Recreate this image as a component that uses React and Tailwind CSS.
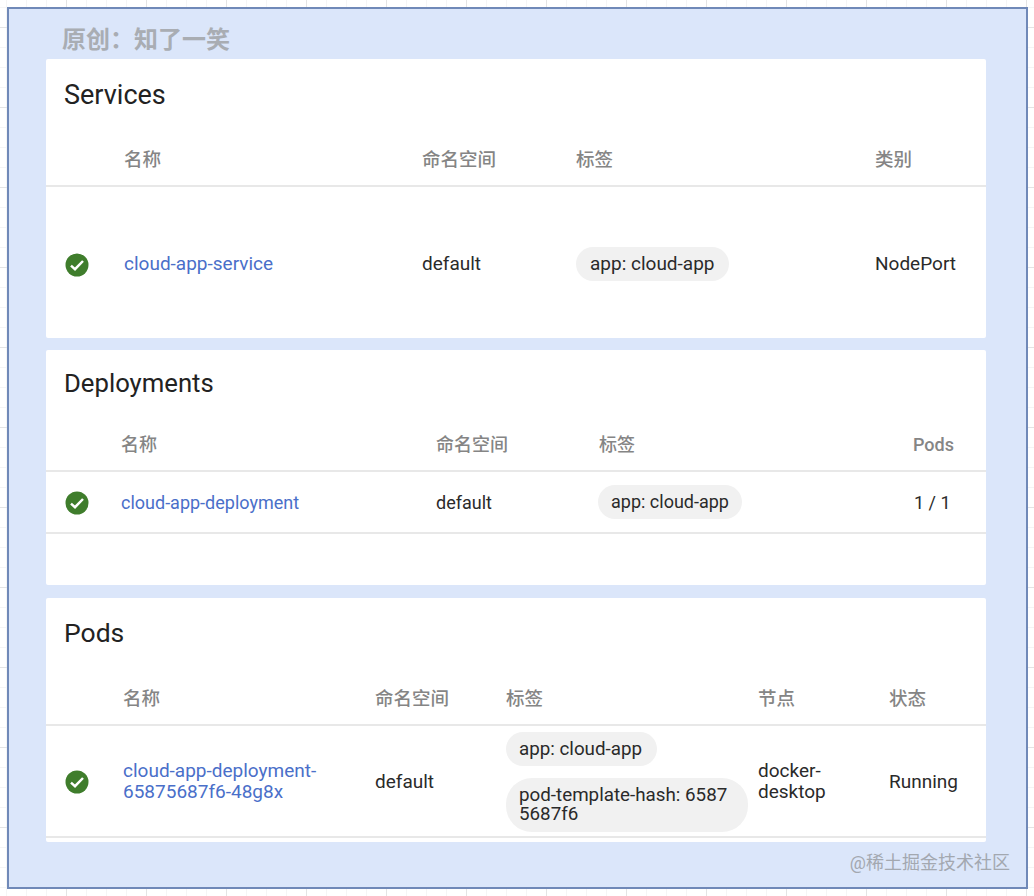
const CheckIcon = () => (
  <svg width="24" height="24" viewBox="0 0 24 24">
    <circle cx="12" cy="12" r="11.5" fill="#3f7d2c" />
    <path d="M6 12.6l4 3.6 8-8.2" fill="none" stroke="#fff" strokeWidth="2.5" />
  </svg>
);

const Chip = ({ children, className = "rounded-[17px] px-[13px] py-[7px] leading-[20px]" }) => (
  <span className={`inline-block bg-[#f1f1f1] ${className}`}>{children}</span>
);

const Link = ({ children }) => <span className="text-[#4a6fc9]">{children}</span>;

const Card = ({ title, titleClass, children, className }) => (
  <section className={`w-[940px] overflow-hidden rounded-[2px] bg-white ${className}`}>
    <h2 className={`text-[#222] ${titleClass}`}>{title}</h2>
    {children}
  </section>
);

export default function App() {
  return (
    <div className="h-[896px] w-[1034px] overflow-hidden bg-white bg-[linear-gradient(#e4e4e4_1px,transparent_1px),linear-gradient(90deg,#e4e4e4_1px,transparent_1px),linear-gradient(#f5f5f5_1px,transparent_1px),linear-gradient(90deg,#f5f5f5_1px,transparent_1px)] bg-[size:80px_80px,80px_80px,20px_20px,20px_20px] bg-[position:66px_27px,66px_27px,6px_7px,6px_7px] pt-[7px] pl-[7px] font-['Roboto','Noto_Sans_CJK_SC',sans-serif] text-[#2a2a2a]">
      <div className="relative flex h-[882px] w-[1021px] flex-col items-start border-2 border-[#7089b8] bg-[#dbe6fa] pl-[37px]">
        <div className="h-[50px] pt-[14px] pl-[16px] text-[24px] leading-[34px] font-bold text-[#a9adb3]">{"原创\uFF1A知了一笑"}</div>

        <Card title="Services" titleClass="pt-[19px] pl-[18px] text-[27px] leading-[34px] h-[71px]" className="h-[279px] text-[19px]">
          <div className="grid h-[57px] grid-cols-[78px_298px_154px_299px_1fr] items-center border-b-2 border-[#e8e8e8] pt-[6px] text-[18.5px] font-medium text-[#858585]">
            <span />
            <span>名称</span>
            <span>命名空间</span>
            <span>标签</span>
            <span>类别</span>
          </div>
          <div className="grid h-[150px] grid-cols-[78px_298px_154px_299px_1fr] items-center pt-[4px]">
            <span className="flex pt-[2px] pl-[19px]"><CheckIcon /></span>
            <Link>cloud-app-service</Link>
            <span>default</span>
            <span><Chip className="rounded-[17px] px-[14px] py-[7px] leading-[20px]">app: cloud-app</Chip></span>
            <span>NodePort</span>
          </div>
        </Card>

        <Card title="Deployments" titleClass="pt-[16px] pl-[18px] text-[25.7px] leading-[34px] h-[68px]" className="mt-[12px] h-[235px] text-[18px]">
          <div className="grid h-[54px] grid-cols-[75px_315px_163px_314px_1fr] items-center border-b-2 border-[#e8e8e8] pt-[1px] text-[18px] font-medium text-[#858585]">
            <span />
            <span>名称</span>
            <span>命名空间</span>
            <span>标签</span>
            <span>Pods</span>
          </div>
          <div className="grid h-[62px] grid-cols-[75px_315px_163px_315px_1fr] items-center border-b-2 border-[#e8e8e8]">
            <span className="flex pt-[2px] pl-[19px]"><CheckIcon /></span>
            <Link>cloud-app-deployment</Link>
            <span>default</span>
            <span className="-ml-px"><Chip>app: cloud-app</Chip></span>
            <span>1 / 1</span>
          </div>
        </Card>

        <Card title="Pods" titleClass="pt-[18px] pl-[18px] text-[26.5px] leading-[34px] h-[70px]" className="mt-[13px] h-[244px] text-[19px]">
          <div className="grid h-[58px] grid-cols-[77px_252px_131px_252px_131px_1fr] items-center border-b-2 border-[#e8e8e8] pt-[8px] text-[18.5px] font-medium text-[#858585]">
            <span />
            <span>名称</span>
            <span>命名空间</span>
            <span>标签</span>
            <span>节点</span>
            <span>状态</span>
          </div>
          <div className="grid h-[112px] grid-cols-[77px_252px_131px_252px_131px_1fr] items-center border-b-2 border-[#e8e8e8] leading-[21px]">
            <span className="flex pt-[2px] pl-[19px]"><CheckIcon /></span>
            <Link>cloud-app-deployment-<br />65875687f6-48g8x</Link>
            <span>default</span>
            <div className="flex flex-col items-start gap-[12px] pt-[2px]">
              <Chip className="rounded-[17px] py-[7px] pr-[15px] pl-[13px] text-[18.8px] leading-[20px]">app: cloud-app</Chip>
              <Chip className="w-[242px] rounded-[26px] px-[13px] py-[8px] text-[18.8px] leading-[19px]">pod-template-hash: 6587<br />5687f6</Chip>
            </div>
            <span>docker-<br />desktop</span>
            <span>Running</span>
          </div>
        </Card>

        <div className="absolute top-[841px] right-[16px] text-[18px] leading-[26px] text-[#a3a8b0]">@稀土掘金技术社区</div>
      </div>
    </div>
  );
}
